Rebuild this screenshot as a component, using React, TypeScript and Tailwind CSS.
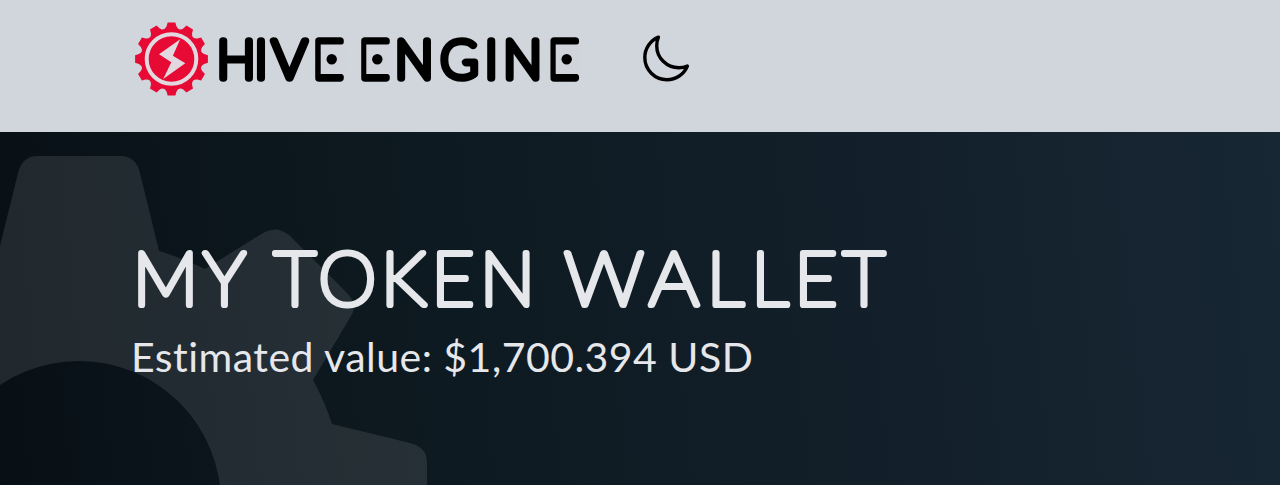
import React from "react";

type Glyph = {
  char: string;
  x: number;
  width?: number;
};

// x is the middle of each glyph, width stretches the ones that are drawn wider
const LOGO_GLYPHS: Glyph[] = [
  { char: "H", x: 236 },
  { char: "I", x: 261 },
  { char: "V", x: 289.5, width: 34 },
  { char: "E", x: 328, width: 30 },
  { char: "E", x: 374, width: 30 },
  { char: "N", x: 414 },
  { char: "G", x: 459.3 },
  { char: "I", x: 491.3 },
  { char: "N", x: 522.5 },
  { char: "E", x: 563.3, width: 30 },
];

const TITLE_GLYPHS: Glyph[] = [
  { char: "M", x: 165.4 },
  { char: "Y", x: 224.5 },
  { char: " ", x: 258 },
  { char: "T", x: 295 },
  { char: "O", x: 347.3 },
  { char: "K", x: 403.5 },
  { char: "E", x: 452.8 },
  { char: "N", x: 507.5 },
  { char: " ", x: 545 },
  { char: "W", x: 604, width: 79 },
  { char: "A", x: 674, width: 49.5 },
  { char: "L", x: 725.5 },
  { char: "L", x: 769.8 },
  { char: "E", x: 816 },
  { char: "T", x: 864 },
];

// every E in the wordmark has a dot in place of the middle bar
const DOTS = [331.7, 377.3, 566.7];

const gearPath = (teeth: number, outer: number, root: number) => {
  const step = 360 / teeth;
  const point = (deg: number, r: number) => {
    const rad = ((deg - 90) * Math.PI) / 180;
    return `${(r * Math.cos(rad)).toFixed(2)} ${(r * Math.sin(rad)).toFixed(2)}`;
  };
  let d = "";
  for (let i = 0; i < teeth; i++) {
    const a = i * step;
    d += `${i === 0 ? "M" : "L"}${point(a - 6, outer)}L${point(a + 6, outer)}`;
    d += `L${point(a + 8.5, root + 2)}Q${point(a + step / 2, root - 2.5)} ${point(a + step - 8.5, root + 2)}`;
  }
  return d + "Z";
};

const RoundedText: React.FC<{
  glyphs: Glyph[];
  y: number;
  size: number;
  weight: number;
  color: string;
}> = ({ glyphs, y, size, weight, color }) => (
  <text
    y={y}
    textAnchor="middle"
    fontFamily="Lato, sans-serif"
    fontWeight="100"
    fontSize={size}
    fill={color}
    stroke={color}
    strokeWidth={weight}
    strokeLinejoin="round"
    xmlSpace="preserve"
  >
    {glyphs.map((g, i) => (
      <tspan
        key={i}
        x={g.x}
        textLength={g.width}
        lengthAdjust={g.width ? "spacingAndGlyphs" : undefined}
      >
        {g.char}
      </tspan>
    ))}
  </text>
);

const Logo: React.FC = () => (
  <svg width="450" height="80" viewBox="134 20 450 80" aria-label="Hive Engine">
    <g transform="translate(171.5 59)">
      <path d={gearPath(12, 36.6, 31)} fill="#e60a35" />
      <circle r="24.8" fill="none" stroke="#e2d9e0" strokeWidth="4" />
    </g>
    <path
      d="M180.2 39.3 159 54.3 171.3 62.3 163.2 79 185.3 63.3 172.9 55.7Z"
      fill="#e2d9e0"
    />
    <RoundedText glyphs={LOGO_GLYPHS} y={77.5} size={51} weight={7.5} color="#000" />
    {DOTS.map((cx) => (
      <g key={cx}>
        <rect x={cx - 11} y="44.5" width="25" height="29.5" fill="#d1d5db" />
        <circle cx={cx} cy="59.2" r="5.2" />
      </g>
    ))}
  </svg>
);

const MoonIcon: React.FC = () => (
  <svg
    className="size-[54.5px]"
    viewBox="0 0 24 24"
    fill="none"
    stroke="#000"
    strokeWidth="1.5"
    strokeLinecap="round"
    strokeLinejoin="round"
  >
    <path d="M21.752 15.002A9.72 9.72 0 0 1 18 15.75c-5.385 0-9.75-4.365-9.75-9.75 0-1.33.266-2.597.748-3.752A9.753 9.753 0 0 0 3 11.25C3 16.635 7.365 21 12.75 21a9.753 9.753 0 0 0 9.002-5.998Z" />
  </svg>
);

const GearBackdrop: React.FC = () => (
  <svg
    className="absolute left-0 top-0"
    width="440"
    height="353"
    viewBox="0 132 440 353"
  >
    <path
      fill="#fff"
      fillOpacity="0.1"
      fillRule="evenodd"
      d="M-1 250 18 173Q22 156 38 156H120Q136 156 140 173L159 251Q183 258 205 269L263 233Q276 225 289 235L345 291Q359 304 351 316L313 380Q325 402 332 424L410 443Q427 447 427 463V520H-20V250ZM221 503A142 142 0 1 0 -63 503A142 142 0 1 0 221 503Z"
    />
  </svg>
);

const App: React.FC = () => {
  return (
    <div className="h-[485px] w-full overflow-hidden bg-[#0d1820] text-gray-200 font-[Lato,sans-serif]">
      <header className="flex h-[132px] items-start bg-gray-300 pl-[134px] pt-5">
        <Logo />
        <div className="ml-[54.4px] mt-3">
          <MoonIcon />
        </div>
      </header>
      <main className="relative h-[353px] bg-[linear-gradient(84deg,#081016_0%,#0e1a21_35%,#13202b_70%,#172733_100%)]">
        <GearBackdrop />
        <div className="relative pl-[132px] pt-[96px]">
          <h1 className="h-[102px]">
            <svg width="770" height="102" viewBox="132 228 770 102">
              <RoundedText glyphs={TITLE_GLYPHS} y={305} size={73.5} weight={6.2} color="#e5e7eb" />
            </svg>
          </h1>
          <p className="-ml-px whitespace-nowrap text-[41px] leading-[54px] tracking-[0.48px] [font-variant-ligatures:none]">
            Estimated value: $1,700.394 USD
          </p>
        </div>
      </main>
    </div>
  );
};

export default App;
